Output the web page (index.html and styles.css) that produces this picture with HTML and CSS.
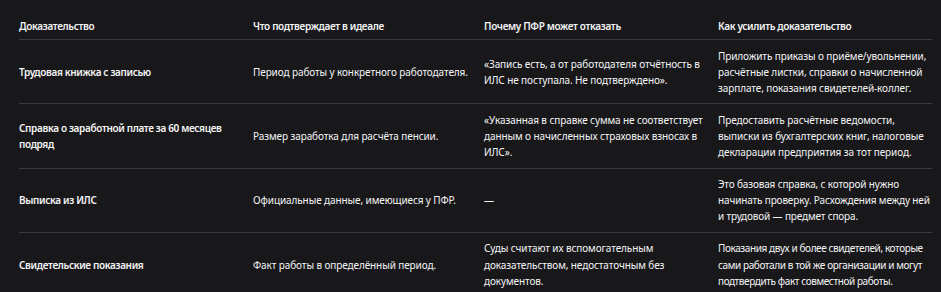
FILE: index.html
```html
<!DOCTYPE html>
<html lang="ru">
<head>
<meta charset="utf-8">
<title>Доказательства</title>
<link rel="stylesheet" href="styles.css">
</head>
<body>
<div class="wrap">
<table class="evidence">
  <colgroup>
    <col class="c1"><col class="c2"><col class="c3"><col class="c4">
  </colgroup>
  <thead>
    <tr>
      <th>Доказательство</th>
      <th>Что подтверждает в идеале</th>
      <th>Почему ПФР может отказать</th>
      <th>Как усилить доказательство</th>
    </tr>
  </thead>
  <tbody>
    <tr>
      <td class="name">Трудовая книжка с записью</td>
      <td>Период работы у конкретного работодателя.</td>
      <td>«Запись есть, а от работодателя отчётность в ИЛС не поступала. Не подтверждено».</td>
      <td>Приложить приказы о приёме/увольнении, расчётные листки, справки о начисленной зарплате, показания свидетелей-коллег.</td>
    </tr>
    <tr>
      <td class="name">Справка о заработной плате за 60 месяцев подряд</td>
      <td>Размер заработка для расчёта пенсии.</td>
      <td>«Указанная в справке сумма не соответствует данным о начисленных страховых взносах в ИЛС».</td>
      <td>Предоставить расчётные ведомости, выписки из бухгалтерских книг, налоговые декларации предприятия за тот период.</td>
    </tr>
    <tr>
      <td class="name">Выписка из ИЛС</td>
      <td>Официальные данные, имеющиеся у ПФР.</td>
      <td>—</td>
      <td class="snug">Это базовая справка, с которой нужно начинать проверку. Расхождения между ней и трудовой — предмет спора.</td>
    </tr>
    <tr>
      <td class="name">Свидетельские показания</td>
      <td>Факт работы в определённый период.</td>
      <td>Суды считают их вспомогательным доказательством, недостаточным без документов.</td>
      <td class="tight">Показания двух и более свидетелей, которые сами работали в той же организации и могут подтвердить факт совместной работы.</td>
    </tr>
  </tbody>
</table>
</div>
</body>
</html>
```
FILE: styles.css
```css
html, body {
  margin: 0;
  background: #18181b;
}
body {
  padding: 7px 9px 0 19px;
  font-family: "Noto Sans", "Open Sans", sans-serif;
  font-size: 10px;
  line-height: 16.1px;
  letter-spacing: -0.1px;
  color: #f4f4f5;
}
.evidence {
  width: 913px;
  border-collapse: collapse;
  table-layout: fixed;
}
.c1 { width: 234px; }
.c2 { width: 231px; }
.c3 { width: 234px; }
.c4 { width: 214px; }
.evidence th,
.evidence td {
  padding: 7.5px 6px 7.5px 0;
  text-align: left;
  vertical-align: middle;
}
.evidence th {
  padding-top: 11px;
  padding-bottom: 5px;
  font-weight: 600;
  letter-spacing: -0.35px;
  border-bottom: 1px solid #3a3a3d;
}
.evidence th:last-child,
.evidence td:last-child {
  padding-right: 0;
}
.evidence td.snug {
  letter-spacing: -0.15px;
}
.evidence td.tight {
  letter-spacing: -0.4px;
}
.evidence tbody tr + tr td {
  border-top: 1px solid #3a3a3d;
}
.evidence td.name {
  font-weight: 600;
  letter-spacing: -0.35px;
}
```
